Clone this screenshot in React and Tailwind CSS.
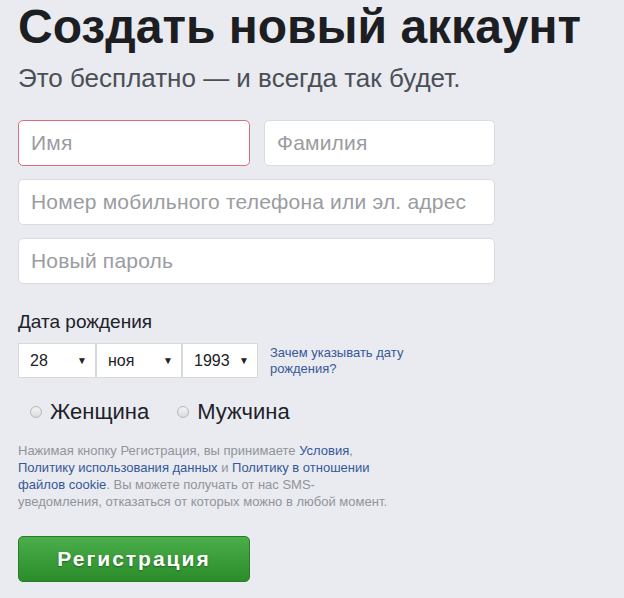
import React from "react";

const Field = ({ placeholder, error, className = "" }) => (
  <div
    className={`h-[46px] flex items-center px-[12px] bg-white rounded-[5px] border ${
      error ? "border-[#d8707a]" : "border-[#d9dbe0]"
    } ${className}`}
  >
    <span className="text-[21px] tracking-[0.2px] text-[#9a9ca1]">{placeholder}</span>
  </div>
);

const Select = ({ value, width }) => (
  <div
    className={`h-[35px] ${width} flex items-center justify-between bg-white border border-[#d6d8dc] pl-[11px] pr-[8px]`}
  >
    <span className="text-[16px] text-[#1d2129]">{value}</span>
    <span className="text-[10px] text-[#1d2129]">▼</span>
  </div>
);

const Radio = ({ label }) => (
  <label className="flex items-center gap-[8px]">
    <span className="w-[12px] h-[12px] rounded-full border border-[#b5b7bc] bg-gradient-to-b from-[#f4f4f4] to-[#dcdcdc]" />
    <span className="text-[22px] text-[#1d2129]">{label}</span>
  </label>
);

const Link = ({ children }) => <span className="text-[#365899]">{children}</span>;

export default function App() {
  return (
    <div
      className="w-[624px] h-[598px] bg-[#e9ebf0] px-[18px] overflow-hidden"
      style={{ fontFamily: '"Liberation Sans", Arial, sans-serif' }}
    >
      <h1 className="text-[48px] leading-[50px] font-bold text-[#1c1e21] pt-[2px]">
        Создать новый аккаунт
      </h1>
      <div className="mt-[11px] text-[26px] leading-[30px] text-[#4b4f56]">
        Это бесплатно — и всегда так будет.
      </div>

      <div className="mt-[27px] w-[477px] flex flex-col gap-[13px]">
        <div className="flex gap-[14px]">
          <Field placeholder="Имя" error className="w-[232px]" />
          <Field placeholder="Фамилия" className="w-[231px]" />
        </div>
        <Field placeholder="Номер мобильного телефона или эл. адрес" />
        <Field placeholder="Новый пароль" />
      </div>

      <div className="mt-[26px] text-[19px] leading-[24px] text-[#1d2129]">Дата рождения</div>
      <div className="mt-[9px] flex items-center">
        <Select value="28" width="w-[78px]" />
        <Select value="ноя" width="w-[86px]" />
        <Select value="1993" width="w-[76px]" />
        <div className="ml-[12px] text-[13px] leading-[16px] text-[#365899] w-[160px]">
          Зачем указывать дату рождения?
        </div>
      </div>

      <div className="mt-[17px] flex items-center gap-[28px] pl-[12px]">
        <Radio label="Женщина" />
        <Radio label="Мужчина" />
      </div>

      <p className="mt-[14px] text-[13px] leading-[17px] text-[#90949c]">
        Нажимая кнопку Регистрация, вы принимаете <Link>Условия</Link>,
        <br />
        <Link>Политику использования данных</Link> и <Link>Политику в отношении</Link>
        <br />
        <Link>файлов cookie</Link>. Вы можете получать от нас SMS-
        <br />
        уведомления, отказаться от которых можно в любой момент.
      </p>

      <button className="mt-[26px] w-[232px] h-[46px] rounded-[5px] border border-[#2a7a2a] bg-gradient-to-b from-[#4aae4a] to-[#2a8d2a] text-white text-[21px] font-bold tracking-[2px] [text-shadow:0_1px_2px_rgba(0,0,0,0.35)]">
        Регистрация
      </button>
    </div>
  );
}
